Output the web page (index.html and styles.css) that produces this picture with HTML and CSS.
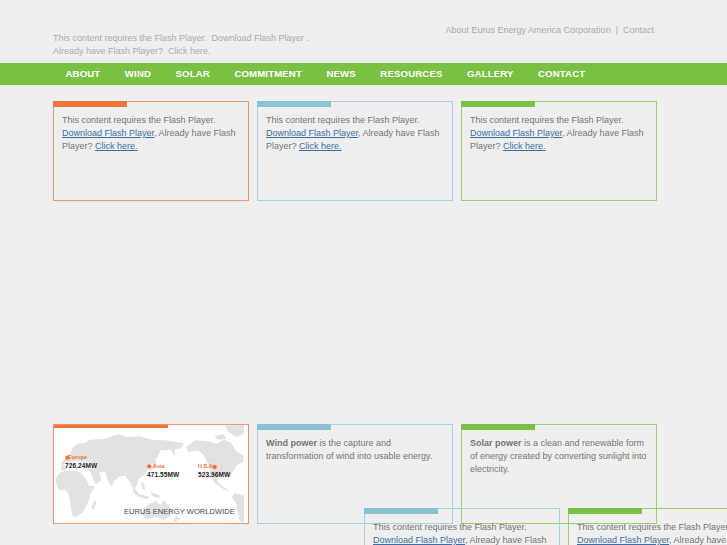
FILE: index.html
```html
<!DOCTYPE html>
<html lang="en">
<head>
<meta charset="utf-8">
<title>Eurus Energy America</title>
<link rel="stylesheet" href="styles.css">
</head>
<body>
<header class="top">
  <div class="flash-note">
    <p>This content requires the Flash Player.&nbsp; Download Flash Player .</p>
    <p>Already have Flash Player?&nbsp; Click here.</p>
  </div>
  <div class="util">About Eurus Energy America Corporation&nbsp; |&nbsp; Contact</div>
</header>
<nav class="nav">
  <a>ABOUT</a><a>WIND</a><a>SOLAR</a><a>COMMITMENT</a><a>NEWS</a><a>RESOURCES</a><a>GALLERY</a><a>CONTACT</a>
</nav>
<main class="main">
  <section class="row row-top">
    <article class="card orange"><p>This content requires the Flash Player. <a href="#">Download Flash Player</a>, Already have Flash Player? <a href="#">Click here.</a></p></article>
    <article class="card blue"><p>This content requires the Flash Player. <a href="#">Download Flash Player</a>, Already have Flash Player? <a href="#">Click here.</a></p></article>
    <article class="card green"><p>This content requires the Flash Player. <a href="#">Download Flash Player</a>, Already have Flash Player? <a href="#">Click here.</a></p></article>
  </section>
  <section class="row row-bottom">
    <article class="card orange map-card">
      <svg class="map" viewBox="0 0 190 98" width="190" height="98" aria-hidden="true">
        <g transform="translate(-14 -10) scale(.3333)" fill="#e2e2e2">
          <path d="M62 165 L66 140 L78 128 L92 118 L96 100 L112 86 L135 84 L150 74 L190 72 L235 58 L262 66 L300 64 L335 74 L375 76 L430 84 L424 98 L405 104 L403 124 L392 104 L362 106 L350 130 L338 146 L322 150 L326 162 L315 178 L296 192 L292 208 L280 226 L270 200 L256 182 L238 184 L222 198 L214 216 L204 198 L196 172 L178 172 L184 196 L166 208 L152 172 L136 160 L122 150 L108 166 L96 154 L86 150 L74 166Z"/>
          <path d="M46 194 L58 174 L74 168 L108 168 L122 172 L138 192 L148 212 L166 214 L152 234 L146 258 L130 290 L110 306 L98 304 L92 272 L86 236 L76 226 L56 226Z"/>
          <path d="M164 256 L170 262 L160 284 L154 278Z"/>
          <path d="M340 134 L350 138 L346 156 L330 168 L326 162 L340 150Z"/>
          <path d="M284 220 L300 238 L328 246 L322 252 L296 246 L278 230Z"/>
          <path d="M304 202 L312 206 L316 226 L306 220Z"/>
          <path d="M332 232 L358 240 L360 250 L340 246Z"/>
          <path d="M310 280 L330 266 L348 258 L362 270 L372 254 L394 284 L392 302 L370 316 L350 306 L316 312 L306 296Z"/>
          <path d="M408 304 L418 312 L406 322 L400 318Z"/>
          <path d="M438 96 L466 76 L500 78 L530 86 L552 74 L572 82 L590 110 L610 120 L610 140 L590 152 L578 170 L566 192 L560 176 L538 180 L530 198 L560 222 L572 232 L550 222 L524 204 L512 178 L504 146 L490 118 L474 106 L444 112Z"/>
          <path d="M584 234 L612 240 L612 322 L600 322 L594 292 L588 264 L576 248Z"/>
          <path d="M556 34 L612 28 L612 56 L590 66 L566 52Z"/>
          <path d="M524 62 L550 58 L560 72 L532 74Z"/>
        </g>
        <g transform="translate(-14 -10) scale(.3333)">
          <ellipse cx="120" cy="151" rx="50" ry="12" fill="#fff" opacity=".75"/>
          <circle cx="82" cy="128" r="6.5" fill="#ef7238"/>
          <circle cx="328" cy="154" r="6.5" fill="#ef7238"/>
          <circle cx="524" cy="156" r="6.5" fill="#ef7238"/>
          <circle cx="520" cy="158" r="27" fill="none" stroke="#f2c7b2" stroke-width="1.5"/>
        </g>
      </svg>
      <span class="pin pin-eu"><i>Europe</i><b>726.24MW</b></span>
      <span class="pin pin-as"><i>Asia</i><b>471.55MW</b></span>
      <span class="pin pin-us"><i>U.S.A</i><b>523.96MW</b></span>
      <span class="map-title">EURUS ENERGY WORLDWIDE</span>
    </article>
    <article class="card blue"><p><b>Wind power</b> is the capture and transformation of wind into usable energy.</p></article>
    <article class="card green"><p><b>Solar power</b> is a clean and renewable form of energy created by converting sunlight into electricity.</p></article>
  </section>
</main>
<article class="card blue float float-a"><p>This content requires the Flash Player. <a href="#">Download Flash Player</a>, Already have Flash Player? <a href="#">Click here.</a></p></article>
<article class="card green float float-b"><p>This content requires the Flash Player. <a href="#">Download Flash Player</a>, Already have Flash Player? <a href="#">Click here.</a></p></article>
</body>
</html>
```
FILE: styles.css
```css
* { box-sizing: border-box; }
html, body { margin: 0; height: 545px; overflow: hidden; }
body {
  position: relative;
  background: #efefef;
  font-family: "Liberation Sans", Arial, sans-serif;
  font-size: 9px;
  line-height: 13px;
  color: #757575;
}
p { margin: 0; }
.top {
  display: flex;
  justify-content: space-between;
  width: 601px;
  height: 63px;
  margin-left: 53px;
  color: #aaa;
}
.flash-note { padding-top: 32px; }
.util { padding-top: 24px; }
.nav {
  display: flex;
  gap: 24.5px;
  height: 22px;
  padding-left: 65.5px;
  background: #7ac143;
  color: #fff;
  font-size: 9.6px;
  font-weight: bold;
  line-height: 21px;
  letter-spacing: .15px;
}
.main { margin: 16px 0 0 53px; }
.row { display: flex; gap: 8px; }
.row-bottom { margin-top: 223px; }
.card {
  position: relative;
  width: 196px;
  height: 100px;
  flex: none;
  padding: 12px 8px 0;
  border: 1px solid;
}
.card::before {
  content: "";
  position: absolute;
  top: -1px;
  left: -1px;
  width: 74px;
  height: 6px;
}
.card a { color: #3a6ea5; text-decoration: underline; }
.card b { font-weight: bold; }
.orange { border-color: #f0956a; }
.orange::before { background: #ef7238; }
.blue { border-color: #a5d3e0; }
.blue::before { background: #88c3d2; }
.green { border-color: #99cf70; }
.green::before { background: #7ac143; }
.map-card { padding: 0; background: #fff; overflow: hidden; }
.map-card::before { width: 115px; z-index: 1; height: 4px; }
.map { display: block; }
.pin {
  position: absolute;
  display: flex;
  flex-direction: column;
  gap: 1px;
  font-size: 5.5px;
  line-height: 7px;
}
.pin i { font-style: normal; font-weight: bold; color: #ef7238; }
.pin b { color: #222; font-size: 6.5px; letter-spacing: .1px; }
.pin-eu { left: 11px; top: 29px; }
.pin-eu i { margin-left: 3px; }
.pin-as { left: 93px; top: 38px; }
.pin-as i { margin-left: 6px; }
.pin-us { left: 144px; top: 38px; }
.map-title {
  position: absolute;
  left: 70px;
  top: 81px;
  font-size: 7.6px;
  line-height: 11px;
  color: #4a4a4a;
  white-space: nowrap;
}
.float { position: absolute; top: 508px; }
.float-a { left: 364px; }
.float-b { left: 568px; }
```
